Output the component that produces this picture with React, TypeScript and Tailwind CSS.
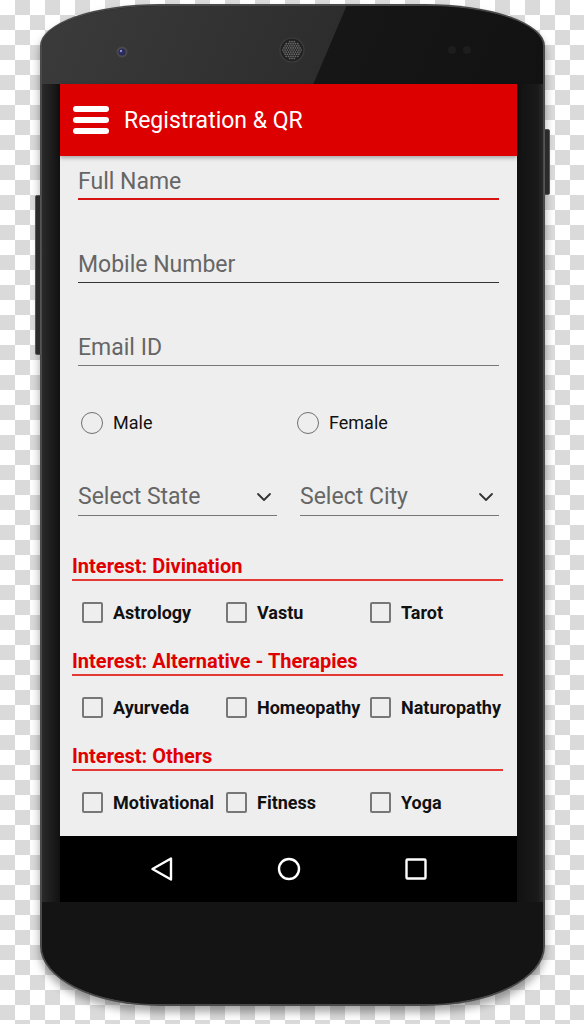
import React from 'react';

const sections = [
  { title: 'Interest: Divination', items: ['Astrology', 'Vastu', 'Tarot'] },
  { title: 'Interest: Alternative - Therapies', items: ['Ayurveda', 'Homeopathy', 'Naturopathy'] },
  { title: 'Interest: Others', items: ['Motivational', 'Fitness', 'Yoga'] },
];

// speaker grille dots, kept inside a circle
const grille: { x: number; y: number }[] = [];
for (let r = -4; r <= 4; r++) {
  for (let c = -4; c <= 4; c++) {
    const x = c * 2.3 + (r % 2 ? 1.15 : 0);
    const y = r * 2.1;
    if (x * x + y * y < 85) grille.push({ x, y });
  }
}

function Chevron() {
  return (
    <svg width="16" height="10" viewBox="0 0 16 10" className="mr-[5px]">
      <path d="M2 2 L8 8 L14 2" fill="none" stroke="#333" strokeWidth="1.8" strokeLinecap="round" strokeLinejoin="round" />
    </svg>
  );
}

function TopBezel() {
  return (
    <svg width="501" height="78" viewBox="0 0 501 78">
      {/* front camera */}
      <circle cx="80" cy="46" r="5.5" fill="#4a4a4a" />
      <circle cx="80" cy="46" r="3.6" fill="#2a2a5c" />
      <circle cx="79" cy="45" r="1.2" fill="#8a8ad0" />
      {/* speaker */}
      <circle cx="250" cy="44" r="12" fill="#222" stroke="#3e3e3e" strokeWidth="1.2" />
      {grille.map((d, i) => (
        <circle key={i} cx={250 + d.x} cy={44 + d.y} r="0.85" fill="#6a6a6a" />
      ))}
      {/* sensors */}
      <circle cx="410" cy="44" r="4" fill="#1d1d1d" />
      <circle cx="425" cy="44" r="4" fill="#1d1d1d" />
    </svg>
  );
}

function Field({ label, line }: { label: string; line: string }) {
  return (
    <div className="ml-[18px] w-[421px]">
      <div className="h-[28px] text-[23px] leading-[28px] text-[#666666]">{label}</div>
      <div className={line} />
    </div>
  );
}

function Select({ label }: { label: string }) {
  return (
    <div className="w-[199px]">
      <div className="flex h-[28px] items-center justify-between">
        <span className="text-[23px] leading-[28px] text-[#666666]">{label}</span>
        <Chevron />
      </div>
      <div className="mt-[4px] h-[1px] bg-[#777777]" />
    </div>
  );
}

export default function App() {
  return (
    <div className="h-[1024px] w-[584px] overflow-hidden bg-[conic-gradient(#dadada_25%,#ffffff_0_50%,#dadada_0_75%,#ffffff_0)] bg-[length:30px_30px] pl-[40px] pt-[4px] font-['Roboto','Noto_Sans',sans-serif]">
      {/* Phone */}
      <div className="relative h-[1002px] w-[505px] rounded-t-[120px_42px] rounded-b-[120px_60px] bg-[#4a4a4a] p-[2px] shadow-[0_6px_8px_rgba(0,0,0,0.35)]">
        <div className="absolute left-[-5px] top-[191px] h-[160px] w-[6px] rounded-l-[2px] border border-[#555] bg-[#2b2b2b]" />
        <div className="absolute right-[-5px] top-[125px] h-[66px] w-[6px] rounded-r-[2px] border border-[#555] bg-[#2b2b2b]" />

        <div className="flex h-full flex-col overflow-hidden rounded-t-[118px_40px] rounded-b-[118px_58px] bg-[#151515]">
          <div className="h-[78px] shrink-0 bg-[linear-gradient(113deg,#3b3b3b_0%,#2d2d2d_56.9%,#161616_57.1%,#121212_100%)]">
            <TopBezel />
          </div>

          <div className="flex h-[818px] shrink-0">
            <div className="w-[18px] bg-[linear-gradient(90deg,#2a2a2a,#111)]" />

            {/* Screen */}
            <div className="flex w-[457px] flex-col">
              <div className="relative z-10 flex h-[72px] items-center bg-[#dd0000] pl-[13px] shadow-[0_2px_4px_rgba(0,0,0,0.3)]">
                <div className="flex w-[36px] flex-col gap-[5px]">
                  <div className="h-[6px] rounded-full bg-white" />
                  <div className="h-[6px] rounded-full bg-white" />
                  <div className="h-[6px] rounded-full bg-white" />
                </div>
                <span className="ml-[15px] mt-[3px] text-[23px] text-white">Registration &amp; QR</span>
              </div>

              <div className="flex h-[680px] flex-col bg-[#eeeeee] pt-[12px]">
                <Field label="Full Name" line="mt-[2px] h-[2px] bg-[#d71414]" />
                <div className="mt-[51px]">
                  <Field label="Mobile Number" line="mt-[3px] h-[1px] bg-[#333333]" />
                </div>
                <div className="mt-[51px]">
                  <Field label="Email ID" line="mt-[3px] h-[1px] bg-[#777777]" />
                </div>

                <div className="ml-[21px] mt-[46px] flex h-[22px]">
                  <label className="flex w-[216px] items-center">
                    <span className="h-[22px] w-[22px] rounded-full border-[1.5px] border-[#707070]" />
                    <span className="ml-[10px] text-[18px] leading-[22px] text-[#111111]">Male</span>
                  </label>
                  <label className="flex items-center">
                    <span className="h-[22px] w-[22px] rounded-full border-[1.5px] border-[#707070]" />
                    <span className="ml-[10px] text-[18px] leading-[22px] text-[#111111]">Female</span>
                  </label>
                </div>

                <div className="ml-[18px] mt-[49px] flex gap-[23px]">
                  <Select label="Select State" />
                  <Select label="Select City" />
                </div>

                {sections.map((s, i) => (
                  <div key={s.title} className={i === 0 ? 'mt-[38px]' : 'mt-[26px]'}>
                    <div className="ml-[12px] w-[431px]">
                      <div className="h-[24px] text-[20px] font-bold leading-[24px] text-[#e00000]">{s.title}</div>
                      <div className="mt-[1px] h-[2px] bg-[#e53935]" />
                    </div>
                    <div className="ml-[22px] mt-[21px] flex h-[21px]">
                      {s.items.map((item) => (
                        <label key={item} className="flex w-[144px] items-center">
                          <span className="h-[21px] w-[21px] shrink-0 rounded-[2px] border-2 border-[#777777]" />
                          <span className="ml-[10px] whitespace-nowrap text-[18px] font-bold leading-[21px] text-[#111111]">{item}</span>
                        </label>
                      ))}
                    </div>
                  </div>
                ))}
              </div>

              {/* Nav bar */}
              <div className="flex h-[66px] items-center justify-center bg-black">
                <div className="flex w-[127px] justify-center">
                  <svg width="24" height="26" viewBox="0 0 24 26">
                    <path d="M2.5 13 L21 2.5 L21 23.5 Z" fill="none" stroke="white" strokeWidth="2.4" strokeLinejoin="round" />
                  </svg>
                </div>
                <div className="flex w-[127px] justify-center">
                  <svg width="24" height="24" viewBox="0 0 24 24">
                    <circle cx="12" cy="12" r="10" fill="none" stroke="white" strokeWidth="2.4" />
                  </svg>
                </div>
                <div className="flex w-[127px] justify-center">
                  <svg width="22" height="22" viewBox="0 0 22 22">
                    <rect x="1.5" y="1.5" width="19" height="19" rx="1" fill="none" stroke="white" strokeWidth="2.4" />
                  </svg>
                </div>
              </div>
            </div>

            <div className="flex-1 bg-[linear-gradient(90deg,#111,#1a1a1a_80%,#2a2a2a)]" />
          </div>

          <div className="flex-1 bg-[#141414]" />
        </div>
      </div>
    </div>
  );
}
